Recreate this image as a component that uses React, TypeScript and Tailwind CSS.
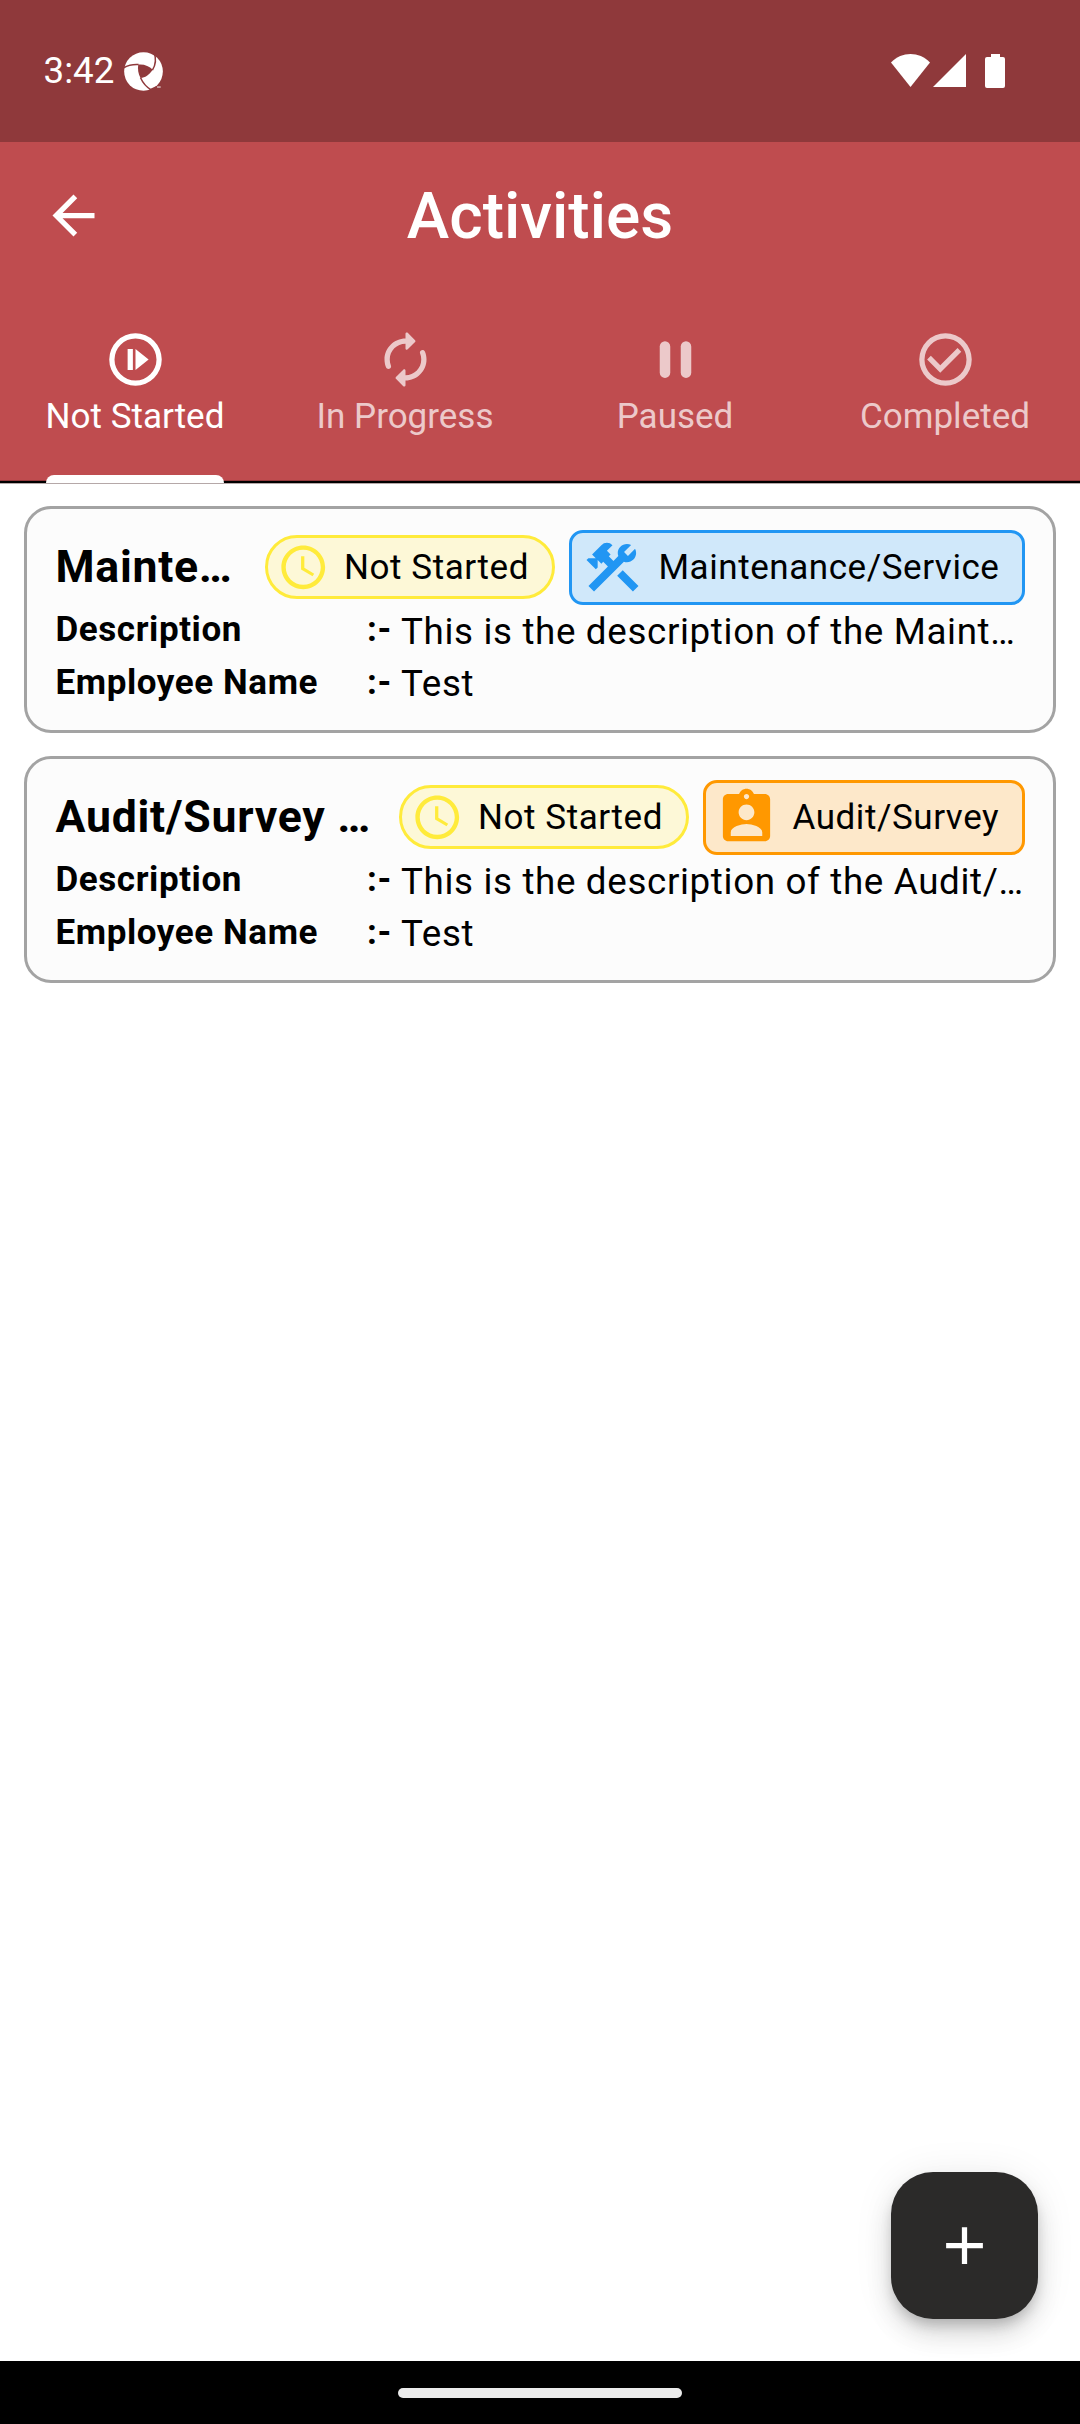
import React from "react";
import {
  MdAccessTime,
  MdAdd,
  MdArrowBack,
  MdAssignmentInd,
  MdConstruction,
} from "react-icons/md";

type IconProps = { className?: string };

function NotStartedIcon({ className }: IconProps) {
  return (
    <svg viewBox="0 0 24 24" fill="currentColor" className={className}>
      <path
        fillRule="evenodd"
        d="M12 2a10 10 0 1 0 0 20 10 10 0 0 0 0-20zm0 2a8 8 0 1 1 0 16 8 8 0 0 1 0-16zM9 8h2v8H9zM12 8l5 4-5 4z"
      />
    </svg>
  );
}

function AutorenewIcon({ className }: IconProps) {
  return (
    <svg viewBox="0 0 24 24" fill="currentColor" className={className}>
      <path d="M12 6v1.79c0 .45.54.67.85.35l2.79-2.79c.2-.2.2-.51 0-.71l-2.79-2.79c-.31-.31-.85-.09-.85.36V4c-4.42 0-8 3.58-8 8 0 1.04.2 2.04.57 2.95.27.67 1.13.85 1.64.34.27-.27.38-.68.23-1.04C6.15 13.56 6 12.79 6 12c0-3.31 2.69-6 6-6zm5.79 2.71c-.27.27-.38.69-.23 1.04.28.7.44 1.46.44 2.25 0 3.31-2.69 6-6 6v-1.79c0-.45-.54-.67-.85-.35l-2.79 2.79c-.2.2-.2.51 0 .71l2.79 2.79c.31.31.85.09.85-.35V20c4.42 0 8-3.58 8-8 0-1.04-.2-2.04-.57-2.95-.27-.67-1.13-.85-1.64-.34z" />
    </svg>
  );
}

function PauseIcon({ className }: IconProps) {
  return (
    <svg viewBox="0 0 24 24" fill="currentColor" className={className}>
      <rect x="6" y="5" width="4" height="14" rx="2" />
      <rect x="14" y="5" width="4" height="14" rx="2" />
    </svg>
  );
}

function CheckCircleIcon({ className }: IconProps) {
  return (
    <svg viewBox="0 0 24 24" fill="currentColor" className={className}>
      <path
        fillRule="evenodd"
        d="M12 2a10 10 0 1 0 0 20 10 10 0 0 0 0-20zm0 2a8 8 0 1 1 0 16 8 8 0 0 1 0-16z"
      />
      <path d="M16.59 7.58L10 14.17l-3.59-3.58L5 12l5 5 8-8z" />
    </svg>
  );
}

function SwirlIcon({ className }: IconProps) {
  return (
    <svg viewBox="0 0 118 118" className={className}>
      <circle cx="59" cy="59" r="58.5" fill="#fff" />
      <path
        d="M43 38C60 36 76 42 87 54C76 70 64 78 50 79C43 66 41 52 43 38z"
        fill="#8f393b"
      />
      <g fill="none" stroke="#8f393b" strokeWidth="4.5">
        <path d="M-1 48C12 40 27 37 44 38" />
        <path d="M91 2C98 20 96 38 86 55" />
        <path d="M84 116C70 108 58 96 50 78" />
      </g>
      <path d="M77 113L98 103L112 100L112 120L80 120z" fill="#8f393b" />
      <path d="M100 106h11" stroke="#fff" strokeWidth="4" opacity="0.75" />
    </svg>
  );
}

function StatusBar() {
  return (
    <div className="flex h-[142px] shrink-0 items-center bg-[#8f393b] pr-[75px] pl-[43.5px] text-white">
      <span className="pb-px text-[36.75px] leading-[44px]">3:42</span>
      <SwirlIcon className="ml-[10px] size-[39px]" />
      <div className="ml-auto flex items-start">
        <svg viewBox="0 0 39 33" className="h-[33px] w-[39px]">
          <path d="M0 8.5C11 -2.8 28 -2.8 39 8.5L19.5 33z" fill="#fff" />
        </svg>
        <svg viewBox="0 0 33 33" className="ml-[3px] h-[33px] w-[33px]">
          <path d="M33 0V33H0z" fill="#fff" />
        </svg>
        <svg viewBox="0 0 20 34" className="ml-[19px] h-[34px] w-[20px]">
          <path
            d="M6 0h9v3h3a2 2 0 0 1 2 2v27a2 2 0 0 1-2 2H2a2 2 0 0 1-2-2V5a2 2 0 0 1 2-2h4z"
            fill="#fff"
          />
        </svg>
      </div>
    </div>
  );
}

const tabs = [
  { label: "Not Started", Icon: NotStartedIcon, active: true },
  { label: "In Progress", Icon: AutorenewIcon, active: false },
  { label: "Paused", Icon: PauseIcon, active: false },
  { label: "Completed", Icon: CheckCircleIcon, active: false },
];

function Header() {
  return (
    <header className="shrink-0 bg-[#bf4c4f] text-white">
      <div className="grid h-[147px] grid-cols-[63px_1fr_63px] items-center px-[42px]">
        <MdArrowBack className="size-[63px]" />
        <h1 className="pt-[2px] text-center text-[64px] leading-[77px] font-medium">Activities</h1>
      </div>
      <nav className="relative grid h-[195px] grid-cols-4 border-b border-[#b5a8a8]">
        {tabs.map(({ label, Icon, active }) => (
          <button
            key={label}
            className={
              active
                ? "relative flex flex-col items-center pt-[39px] text-white"
                : "relative flex flex-col items-center pt-[39px] text-[#ecc9ca]"
            }
          >
            <Icon className="size-[63px]" />
            <span className="mt-1 text-[35px] leading-[43px] whitespace-nowrap">{label}</span>
            {active && (
              <span className="absolute bottom-0 left-[46px] z-10 h-2 w-[178px] rounded-t-[8px] bg-white" />
            )}
          </button>
        ))}
        <div className="absolute inset-x-0 bottom-0 h-[3px] border-t border-[#93393c] bg-black" />
      </nav>
    </header>
  );
}

function Field({ label, value }: { label: string; value: string }) {
  return (
    <div className="flex h-[52.5px] items-center text-black">
      <span className="w-[311.5px] pb-[2.4px] text-[35px] leading-[42px] font-bold tracking-[0.58px]">
        {label}
      </span>
      <span className="w-[34px] pb-[2.4px] text-[35px] leading-[42px] font-bold tracking-[0.58px]">
        :-
      </span>
      <span className="pt-px text-[36.75px] leading-[44px] tracking-[0.65px] whitespace-nowrap">
        {value}
      </span>
    </div>
  );
}

const activities = [
  {
    title: "Mainte…",
    type: "Maintenance/Service",
    TypeIcon: MdConstruction,
    chip: "w-[456px] border-[#2196f3] bg-[#d0e8fa]",
    icon: "size-[63px] text-[#2196f3]",
    description: "This is the description of the Maint…",
    employee: "Test",
  },
  {
    title: "Audit/Survey …",
    type: "Audit/Survey",
    TypeIcon: MdAssignmentInd,
    chip: "w-[322px] border-[#ff9800] bg-[#fde8ca]",
    icon: "size-[63px] text-[#ff9800]",
    description: "This is the description of the Audit/…",
    employee: "Test",
  },
];

function ActivityCard({ activity }: { activity: (typeof activities)[number] }) {
  const { title, type, TypeIcon, chip, icon, description, employee } = activity;
  return (
    <article className="h-[227px] rounded-[27px] border-[3px] border-[#a3a3a3] bg-[#fcfcfc] pt-[21px] pr-7 pl-[28.5px]">
      <div className="flex h-[75px] items-center text-black">
        <h2 className="pb-px text-[44.625px] leading-[52px] font-bold tracking-[0.74px] whitespace-nowrap">
          {title}
        </h2>
        <div className="ml-auto flex items-center gap-[14px] text-[35px] leading-[42px] tracking-[0.56px] whitespace-nowrap">
          <div className="mb-px flex h-16 w-[290px] items-center rounded-full border-[3px] border-[#ffeb3b] bg-[#fdf8d7] pl-[8.5px]">
            <MdAccessTime className="size-[52.5px] text-[#ffeb3b]" />
            <span className="ml-[15px] pt-px">Not Started</span>
          </div>
          <div className={`flex h-[75px] items-center rounded-[14px] border-[3px] pl-[8.5px] ${chip}`}>
            <TypeIcon className={icon} />
            <span className="ml-[15px]">{type}</span>
          </div>
        </div>
      </div>
      <Field label="Description" value={description} />
      <Field label="Employee Name" value={employee} />
    </article>
  );
}

export default function App() {
  return (
    <div className="flex h-[2424px] w-[1080px] flex-col overflow-hidden bg-white font-['Roboto',sans-serif]">
      <StatusBar />
      <Header />
      <main className="relative flex flex-1 flex-col gap-[23px] overflow-hidden px-6 pt-[22px]">
        {activities.map((activity) => (
          <ActivityCard key={activity.title} activity={activity} />
        ))}
        <button
          aria-label="Add activity"
          className="absolute right-[42px] bottom-[42px] flex size-[147px] items-center justify-center rounded-[42px] bg-[#2b2a29] text-white shadow-[0_8px_13px_-3px_rgba(0,0,0,0.2),0_16px_26px_0_rgba(0,0,0,0.12),0_3px_40px_0_rgba(0,0,0,0.08)]"
        >
          <MdAdd className="size-[63px]" />
        </button>
      </main>
      <footer className="flex h-[63px] shrink-0 items-center justify-center bg-black">
        <div className="h-[10px] w-[284px] rounded-full bg-[#ebebeb]" />
      </footer>
    </div>
  );
}
